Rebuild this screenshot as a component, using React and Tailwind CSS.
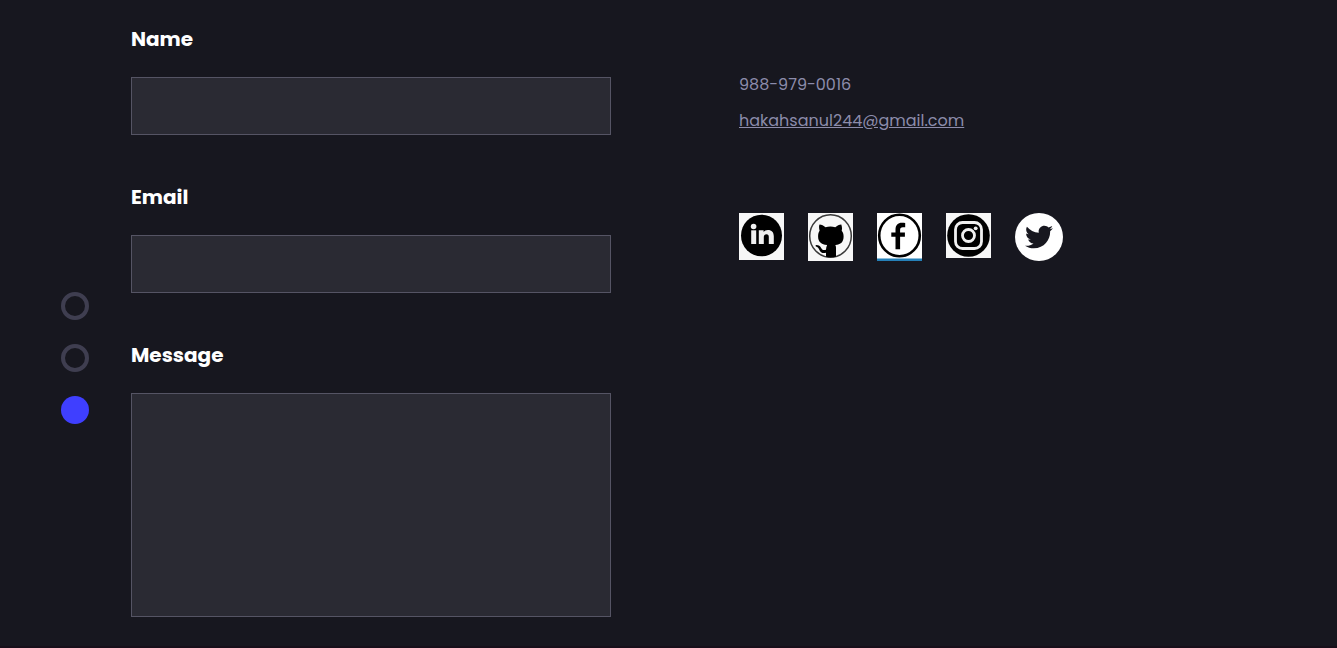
import { FaTwitter } from "react-icons/fa";

function LinkedInIcon() {
  return (
    <svg className="block h-[47px] w-[45px]" viewBox="0 0 45 47" aria-hidden="true">
      <rect width="45" height="47" fill="#f7f7f7" />
      <ellipse cx="22.5" cy="22.5" rx="20.5" ry="20.8" fill="#000" />
      <g fill="#f0f0f0">
        <circle cx="14.6" cy="13.5" r="2.8" />
        <rect x="12.2" y="17.3" width="5" height="13.7" />
        <path d="M19.800 17.300h4.800v1.700c.9-1.300 2.300-2 4.300-2 3.900 0 5.900 2.300 5.900 6.300V31h-5v-6.900c0-2-.7-2.900-2.300-2.900-1.700 0-2.700 1.100-2.700 2.900V31h-5z" />
      </g>
    </svg>
  );
}

function GitHubIcon() {
  return (
    <svg className="block h-12 w-[45px]" viewBox="0 0 45 48" aria-hidden="true">
      <rect width="45" height="48" fill="#f7f7f7" />
      <ellipse cx="22.5" cy="23" rx="20.8" ry="21.3" fill="none" stroke="#3a3a3a" strokeWidth="1.5" />
      <path
        d="M11.500 11.500c2 .1 4.300 1.200 6 2.700a21 21 0 0 1 9.800 0c1.700-1.500 4-2.600 6-2.700.8 2.100.9 4.200.4 6.200 1.300 1.600 1.900 3.400 1.900 5.700 0 5.600-2.800 8-8.300 8.500.5.700.7 1.700.7 2.800v9a22 22 0 0 1-10 0v-3.900c-3.800.6-5.500-.4-6.600-2.900-.8-1.900-1.600-2.700-3.500-3.500-.6-.3-.4-1.300.4-1.300 2.500 0 3.900 1.200 5 3.100 1 1.800 2.500 2.200 4.700 1.500.1-1.800.4-3.500 1.100-4.800-5.800-.6-9-3-9-8.500 0-2.300.4-4.100 1.500-5.700-.5-2-.9-4.100-.1-6.200z"
        fill="#000"
      />
    </svg>
  );
}

function FacebookIcon() {
  return (
    <svg className="block h-12 w-[45px]" viewBox="0 0 45 48" aria-hidden="true">
      <rect width="45" height="48" fill="#fff" />
      <ellipse cx="22.5" cy="22.5" rx="20.3" ry="20.8" fill="none" stroke="#000" strokeWidth="2.6" />
      <path
        d="M18.500 36.300V23.700h-4.200v-4.200h4.200V16.500c0-4.400 2.500-6.700 6.300-6.700 1.300 0 2.500.1 3.400.3v4.200h-2.300c-2 0-2.800 1-2.800 2.800v2.400h4.800v4.200h-4.800v12.600z"
        fill="#000"
      />
      <rect y="45.5" width="45" height="2.5" fill="#2580b8" />
    </svg>
  );
}

function InstagramIcon() {
  return (
    <svg className="block h-[45px] w-[45px]" viewBox="0 0 45 45" aria-hidden="true">
      <rect width="45" height="45" fill="#f7f7f7" />
      <circle cx="22.5" cy="22.5" r="21.3" fill="#000" />
      <g fill="none" stroke="#f0f0f0" strokeWidth="2.8">
        <rect x="9.5" y="9.5" width="26" height="26" rx="7" />
        <circle cx="22.5" cy="22.5" r="6" />
      </g>
      <circle cx="29.7" cy="15.3" r="1.9" fill="#f0f0f0" />
    </svg>
  );
}

function TwitterIcon() {
  return (
    <svg className="block h-12 w-12" viewBox="0 0 48 48" aria-hidden="true">
      <circle cx="24" cy="24" r="24" fill="#fff" />
      <FaTwitter x="10" y="10" size={28} color="#17171f" />
    </svg>
  );
}

const socials = [
  { name: "LinkedIn", Icon: LinkedInIcon },
  { name: "GitHub", Icon: GitHubIcon },
  { name: "Facebook", Icon: FacebookIcon },
  { name: "Instagram", Icon: InstagramIcon },
  { name: "Twitter", Icon: TwitterIcon },
];

const sections = [
  { name: "Home", active: false },
  { name: "Projects", active: false },
  { name: "Contact", active: true },
];

const labelClass = "text-xl leading-[30px] font-bold text-white";
const fieldClass = "w-full rounded-none border border-[#555464] bg-[#2a2a33] text-white outline-none focus:border-[#3f3fff]";

export default function App() {
  return (
    <div className="flex min-h-screen gap-[42px] border-b-2 border-[#170f1a] bg-[#17171f] pr-[118px] pl-[61px] font-[Poppins,Inter,sans-serif]">
      <nav aria-label="Sections" className="flex flex-col gap-6 pt-[292px]">
        {sections.map((section) => (
          <a
            key={section.name}
            href={`#${section.name.toLowerCase()}`}
            aria-label={section.name}
            className={
              section.active
                ? "size-7 rounded-full bg-[#3f3fff]"
                : "size-7 rounded-full border-4 border-[#3f3e50]"
            }
          />
        ))}
      </nav>

      <main className="grid flex-1 grid-cols-2 items-start gap-32">
        <form className="flex flex-col gap-[47px] pt-6 pb-7">
          <div className="flex flex-col gap-[23px]">
            <label htmlFor="name" className={labelClass}>Name</label>
            <input id="name" type="text" className={`${fieldClass} h-[58px] px-4`} />
          </div>
          <div className="flex flex-col gap-[23px]">
            <label htmlFor="email" className={labelClass}>Email</label>
            <input id="email" type="email" className={`${fieldClass} h-[58px] px-4`} />
          </div>
          <div className="flex flex-col gap-[23px]">
            <label htmlFor="message" className={labelClass}>Message</label>
            <textarea id="message" className={`${fieldClass} block h-56 resize-none p-4`} />
          </div>
        </form>

        <section className="pt-[73px] text-base leading-6 text-[#8c8cab]">
          <p>988-979-0016</p>
          <p className="mt-3">
            <a href="mailto:hakahsanul244@gmail.com" className="underline">hakahsanul244@gmail.com</a>
          </p>
          <ul className="mt-20 flex items-start gap-6">
            {socials.map(({ name, Icon }) => (
              <li key={name}>
                <a href={`#${name.toLowerCase()}`} aria-label={name} className="block">
                  <Icon />
                </a>
              </li>
            ))}
          </ul>
        </section>
      </main>
    </div>
  );
}
